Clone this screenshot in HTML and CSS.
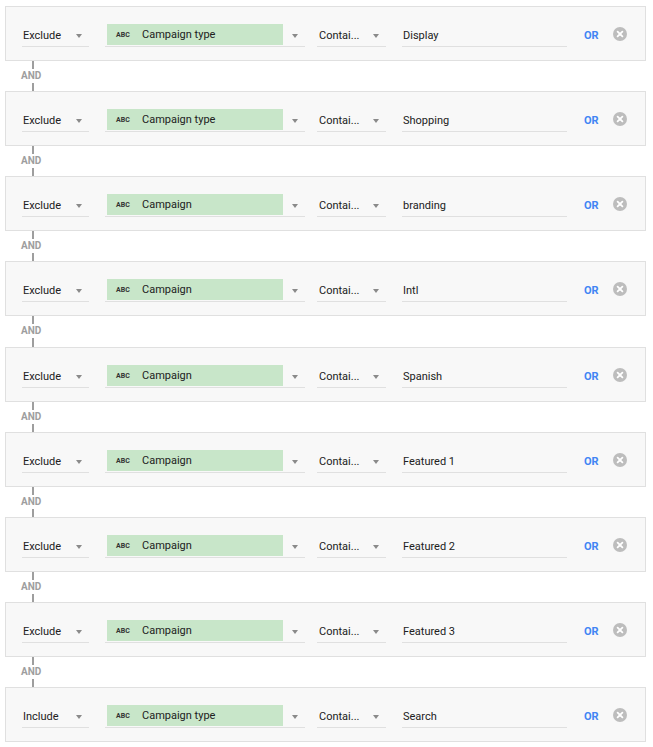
FILE: index.html
```html
<!DOCTYPE html>
<html>
<head>
<meta charset="utf-8">
<link rel="stylesheet" href="styles.css">
</head>
<body>
<div class="list">
  <div class="row">
    <div class="field sel-mode"><span class="txt">Exclude</span><span class="arrow"></span></div>
    <div class="field sel-dim"><span class="chip"><span class="abc">ABC</span><span class="txt">Campaign type</span></span><span class="arrow"></span></div>
    <div class="field sel-op"><span class="txt">Contai...</span><span class="arrow"></span></div>
    <div class="field value"><span class="txt">Display</span></div>
    <span class="or">OR</span>
    <span class="close"><svg viewBox="0 0 14 14" width="14" height="14"><circle cx="7" cy="7" r="7" fill="#bdbdbd"/><path d="M4.6 4.6 L9.4 9.4 M9.4 4.6 L4.6 9.4" stroke="#fff" stroke-width="1.8" stroke-linecap="round"/></svg></span>
  </div>
  <div class="and"><span class="line"></span><span class="and-txt">AND</span><span class="line"></span></div>
  <div class="row">
    <div class="field sel-mode"><span class="txt">Exclude</span><span class="arrow"></span></div>
    <div class="field sel-dim"><span class="chip"><span class="abc">ABC</span><span class="txt">Campaign type</span></span><span class="arrow"></span></div>
    <div class="field sel-op"><span class="txt">Contai...</span><span class="arrow"></span></div>
    <div class="field value"><span class="txt">Shopping</span></div>
    <span class="or">OR</span>
    <span class="close"><svg viewBox="0 0 14 14" width="14" height="14"><circle cx="7" cy="7" r="7" fill="#bdbdbd"/><path d="M4.6 4.6 L9.4 9.4 M9.4 4.6 L4.6 9.4" stroke="#fff" stroke-width="1.8" stroke-linecap="round"/></svg></span>
  </div>
  <div class="and"><span class="line"></span><span class="and-txt">AND</span><span class="line"></span></div>
  <div class="row">
    <div class="field sel-mode"><span class="txt">Exclude</span><span class="arrow"></span></div>
    <div class="field sel-dim"><span class="chip"><span class="abc">ABC</span><span class="txt">Campaign</span></span><span class="arrow"></span></div>
    <div class="field sel-op"><span class="txt">Contai...</span><span class="arrow"></span></div>
    <div class="field value"><span class="txt">branding</span></div>
    <span class="or">OR</span>
    <span class="close"><svg viewBox="0 0 14 14" width="14" height="14"><circle cx="7" cy="7" r="7" fill="#bdbdbd"/><path d="M4.6 4.6 L9.4 9.4 M9.4 4.6 L4.6 9.4" stroke="#fff" stroke-width="1.8" stroke-linecap="round"/></svg></span>
  </div>
  <div class="and"><span class="line"></span><span class="and-txt">AND</span><span class="line"></span></div>
  <div class="row">
    <div class="field sel-mode"><span class="txt">Exclude</span><span class="arrow"></span></div>
    <div class="field sel-dim"><span class="chip"><span class="abc">ABC</span><span class="txt">Campaign</span></span><span class="arrow"></span></div>
    <div class="field sel-op"><span class="txt">Contai...</span><span class="arrow"></span></div>
    <div class="field value"><span class="txt">Intl</span></div>
    <span class="or">OR</span>
    <span class="close"><svg viewBox="0 0 14 14" width="14" height="14"><circle cx="7" cy="7" r="7" fill="#bdbdbd"/><path d="M4.6 4.6 L9.4 9.4 M9.4 4.6 L4.6 9.4" stroke="#fff" stroke-width="1.8" stroke-linecap="round"/></svg></span>
  </div>
  <div class="and and-wide"><span class="line"></span><span class="and-txt">AND</span><span class="line"></span></div>
  <div class="row">
    <div class="field sel-mode"><span class="txt">Exclude</span><span class="arrow"></span></div>
    <div class="field sel-dim"><span class="chip"><span class="abc">ABC</span><span class="txt">Campaign</span></span><span class="arrow"></span></div>
    <div class="field sel-op"><span class="txt">Contai...</span><span class="arrow"></span></div>
    <div class="field value"><span class="txt">Spanish</span></div>
    <span class="or">OR</span>
    <span class="close"><svg viewBox="0 0 14 14" width="14" height="14"><circle cx="7" cy="7" r="7" fill="#bdbdbd"/><path d="M4.6 4.6 L9.4 9.4 M9.4 4.6 L4.6 9.4" stroke="#fff" stroke-width="1.8" stroke-linecap="round"/></svg></span>
  </div>
  <div class="and"><span class="line"></span><span class="and-txt">AND</span><span class="line"></span></div>
  <div class="row">
    <div class="field sel-mode"><span class="txt">Exclude</span><span class="arrow"></span></div>
    <div class="field sel-dim"><span class="chip"><span class="abc">ABC</span><span class="txt">Campaign</span></span><span class="arrow"></span></div>
    <div class="field sel-op"><span class="txt">Contai...</span><span class="arrow"></span></div>
    <div class="field value"><span class="txt">Featured 1</span></div>
    <span class="or">OR</span>
    <span class="close"><svg viewBox="0 0 14 14" width="14" height="14"><circle cx="7" cy="7" r="7" fill="#bdbdbd"/><path d="M4.6 4.6 L9.4 9.4 M9.4 4.6 L4.6 9.4" stroke="#fff" stroke-width="1.8" stroke-linecap="round"/></svg></span>
  </div>
  <div class="and"><span class="line"></span><span class="and-txt">AND</span><span class="line"></span></div>
  <div class="row">
    <div class="field sel-mode"><span class="txt">Exclude</span><span class="arrow"></span></div>
    <div class="field sel-dim"><span class="chip"><span class="abc">ABC</span><span class="txt">Campaign</span></span><span class="arrow"></span></div>
    <div class="field sel-op"><span class="txt">Contai...</span><span class="arrow"></span></div>
    <div class="field value"><span class="txt">Featured 2</span></div>
    <span class="or">OR</span>
    <span class="close"><svg viewBox="0 0 14 14" width="14" height="14"><circle cx="7" cy="7" r="7" fill="#bdbdbd"/><path d="M4.6 4.6 L9.4 9.4 M9.4 4.6 L4.6 9.4" stroke="#fff" stroke-width="1.8" stroke-linecap="round"/></svg></span>
  </div>
  <div class="and"><span class="line"></span><span class="and-txt">AND</span><span class="line"></span></div>
  <div class="row">
    <div class="field sel-mode"><span class="txt">Exclude</span><span class="arrow"></span></div>
    <div class="field sel-dim"><span class="chip"><span class="abc">ABC</span><span class="txt">Campaign</span></span><span class="arrow"></span></div>
    <div class="field sel-op"><span class="txt">Contai...</span><span class="arrow"></span></div>
    <div class="field value"><span class="txt">Featured 3</span></div>
    <span class="or">OR</span>
    <span class="close"><svg viewBox="0 0 14 14" width="14" height="14"><circle cx="7" cy="7" r="7" fill="#bdbdbd"/><path d="M4.6 4.6 L9.4 9.4 M9.4 4.6 L4.6 9.4" stroke="#fff" stroke-width="1.8" stroke-linecap="round"/></svg></span>
  </div>
  <div class="and"><span class="line"></span><span class="and-txt">AND</span><span class="line"></span></div>
  <div class="row">
    <div class="field sel-mode"><span class="txt">Include</span><span class="arrow"></span></div>
    <div class="field sel-dim"><span class="chip"><span class="abc">ABC</span><span class="txt">Campaign type</span></span><span class="arrow"></span></div>
    <div class="field sel-op"><span class="txt">Contai...</span><span class="arrow"></span></div>
    <div class="field value"><span class="txt">Search</span></div>
    <span class="or">OR</span>
    <span class="close"><svg viewBox="0 0 14 14" width="14" height="14"><circle cx="7" cy="7" r="7" fill="#bdbdbd"/><path d="M4.6 4.6 L9.4 9.4 M9.4 4.6 L4.6 9.4" stroke="#fff" stroke-width="1.8" stroke-linecap="round"/></svg></span>
  </div>
</div>
</body>
</html>
```
FILE: styles.css
```css
html, body {
  margin: 0;
  padding: 0;
  background: #fff;
  font-family: Roboto, "Noto Sans", sans-serif;
  color: #212121;
}
.list {
  padding: 6px 0 0 5px;
  width: 641px;
}
.row {
  box-sizing: border-box;
  height: 55px;
  border: 1px solid #e0e0e0;
  background: #f8f8f8;
  display: flex;
  align-items: flex-start;
  padding: 16px 0 0 16px;
}
.field {
  position: relative;
  box-sizing: border-box;
  height: 24px;
  border-bottom: 1px solid #e0e0e0;
  display: flex;
  align-items: center;
  padding-top: 2px;
  font-size: 11px;
}
.field .txt {
  line-height: 14px;
}
.sel-mode {
  width: 67px;
  padding-left: 1px;
}
.sel-dim {
  width: 200px;
  margin-left: 16px;
  padding-left: 2px;
  align-items: flex-start;
  padding-top: 1px;
}
.sel-op {
  width: 69px;
  margin-left: 12px;
  padding-left: 2px;
}
.value {
  width: 165px;
  margin-left: 16px;
  padding-left: 1px;
}
.chip {
  box-sizing: border-box;
  width: 176px;
  height: 21px;
  padding-top: 1px;
  background: #c8e6c9;
  display: flex;
  align-items: center;
}
.abc {
  font-size: 7px;
  font-weight: 700;
  color: #333;
  margin-left: 9px;
  width: 26px;
}
.arrow {
  position: absolute;
  top: 11px;
  right: 7px;
  width: 0;
  height: 0;
  border-left: 3.5px solid transparent;
  border-right: 3.5px solid transparent;
  border-top: 4px solid #8a8a8a;
}
.or {
  margin-left: 17px;
  margin-top: 6px;
  font-size: 11px;
  font-weight: 700;
  color: #4285f4;
  line-height: 14px;
}
.close {
  margin-left: 14px;
  margin-top: 4px;
  width: 14px;
  height: 14px;
  display: flex;
}
.and {
  height: 30px;
  width: 56px;
  display: flex;
  flex-direction: column;
  align-items: flex-start;
}
.and-wide {
  height: 31px;
}
.line {
  display: block;
  width: 2px;
  height: 8px;
  background: #9e9e9e;
  margin-left: 27px;
}
.and-wide .line:last-child {
  height: 9px;
}
.and-txt {
  height: 14px;
  line-height: 14px;
  font-size: 10px;
  font-weight: 700;
  color: #9e9e9e;
  margin-left: 16px;
}
```
